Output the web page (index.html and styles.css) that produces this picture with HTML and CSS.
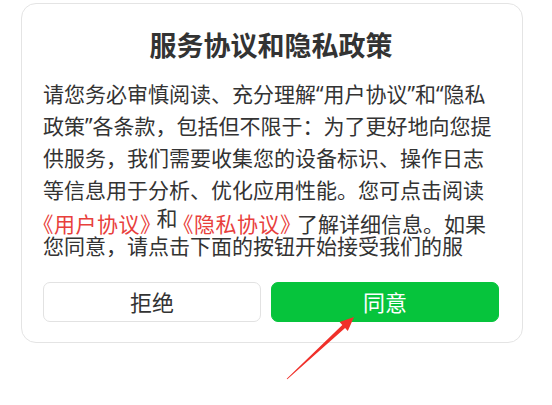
FILE: index.html
```html
<!DOCTYPE html>
<html lang="zh-CN">
<head>
<meta charset="utf-8">
<title>服务协议和隐私政策</title>
<link rel="stylesheet" href="styles.css">
</head>
<body>
<div class="page">
  <div class="dialog">
    <h1 class="title">服务协议和隐私政策</h1>
    <div class="content">
      <p class="para">请您务必审慎阅读、充分理解“用户协议”和“隐私政策”各条款，包括但不限于：为了更好地向您提供服务，我们需要收集您的设备标识、操作日志等信息用于分析、优化应用性能。您可点击阅读</p>
      <p class="para link-line"><a class="link">《用户协议》</a> 和 <a class="link">《隐私协议》</a><span class="low">了解详细信息。如果</span></p>
      <p class="para">您同意，请点击下面的按钮开始接受我们的服</p>
    </div>
    <div class="actions">
      <button class="btn btn-reject">拒绝</button>
      <button class="btn btn-agree">同意</button>
    </div>
  </div>
  <svg class="arrow" width="552" height="405" viewBox="0 0 552 405">
    <polygon fill="#f0302a" points="286.7,378.7 342.3,325.0 339.6,322.1 354,317 347.8,330.9 345.1,328.0 287.3,379.3"/>
  </svg>
</div>
</body>
</html>
```

FILE: styles.css
```css
* { box-sizing: border-box; }
html, body { margin: 0; padding: 0; background: #ffffff; }
body {
  font-family: "Noto Sans", "Noto Sans CJK SC", sans-serif;
  color: #333333;
}
.page {
  position: relative;
  width: 552px;
  height: 405px;
  overflow: hidden;
  padding: 3px 0 0 21px;
}
.dialog {
  width: 502px;
  height: 340px;
  border: 1px solid #e4e4e4;
  border-radius: 15px;
  background: #ffffff;
  padding: 22px 23px 0 21px;
  display: flex;
  flex-direction: column;
}
.title {
  margin: 0;
  height: 40px;
  line-height: 40px;
  font-size: 27px;
  font-weight: 700;
  text-align: center;
  color: #333333;
}
.content {
  margin-top: 12px;
  height: 184px;
  font-size: 21px;
  line-height: 32px;
  color: #333333;
}
.para {
  margin: 0;
}
.link-line {
  height: 24px;
  line-height: 24px;
  white-space: nowrap;
}
.link {
  color: #e8403c;
  font-size: 21px;
  font-feature-settings: "halt";
  letter-spacing: 0.5px;
  vertical-align: -6px;
  text-decoration: none;
}
.low {
  margin-left: 6px;
  vertical-align: -6px;
}
.actions {
  margin-top: 20px;
  display: grid;
  grid-template-columns: 218fr 228fr;
  gap: 10px;
  height: 40px;
}
.btn {
  font-family: "Noto Sans", "Noto Sans CJK SC", sans-serif;
  font-size: 22px;
  border-radius: 7px;
  height: 40px;
  padding: 0;
  line-height: 38px;
}
.btn-reject {
  background: #ffffff;
  border: 1px solid #e2e2e2;
  color: #333333;
}
.btn-agree {
  background: #06c43c;
  border: 1px solid #06c43c;
  color: #ffffff;
}
.arrow {
  position: absolute;
  left: 0;
  top: 0;
  pointer-events: none;
}
```
